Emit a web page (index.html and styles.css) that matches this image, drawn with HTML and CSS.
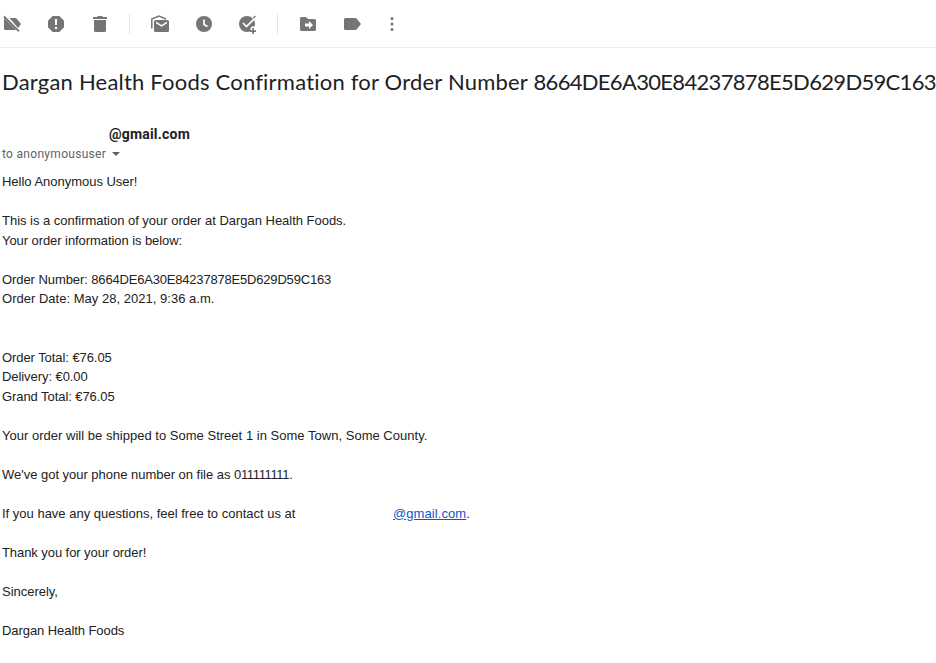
FILE: index.html
```html
<!DOCTYPE html>
<html lang="en">
<head>
<meta charset="utf-8">
<title>Order confirmation</title>
<link rel="stylesheet" href="styles.css">
</head>
<body>
<nav class="toolbar">
  <svg class="icon" viewBox="0 0 20 20"><path d="M7.500 4h5.700c.7 0 1.300.3 1.700.9L19 10l-3 4zM2 4l12.200 12H3.500Q2 16 2 14.500z"/><path d="M2 2.500 17 17.300" stroke="#757575" stroke-width="1.800"/></svg>
  <svg class="icon" viewBox="0 0 20 20"><path fill-rule="evenodd" d="M6.700 2h6.600L18 6.700v6.600L13.300 18H6.700L2 13.300V6.700zM9 5v6h2V5zm1 7.700a1.200 1.200 0 1 0 0 2.400 1.200 1.200 0 0 0 0-2.400z"/></svg>
  <svg class="icon" viewBox="0 0 20 20"><path d="M3 3h4l1-1h4l1 1h4v2H3zM4 6h12v10.500q0 1.500-1.500 1.500h-9Q4 18 4 16.500z"/></svg>
  <span class="divider"></span>
  <svg class="icon" viewBox="0 0 20 20"><path fill-rule="evenodd" d="M5.500 6h12Q19 6 19 7.500v9q0 1.500-1.500 1.500h-12Q4 18 4 16.500v-9Q4 6 5.500 6zM6 7.500v1.800l5.500 3.400L17 9.300V7.500L11.500 11z"/><path d="M1.800 14.500V5L9 2l7 3" fill="none" stroke="#757575" stroke-width="1.500"/></svg>
  <svg class="icon" viewBox="0 0 20 20"><circle cx="10" cy="10" r="8"/><path class="cut" d="M10 5.500v5l3.500 2"/></svg>
  <svg class="icon" viewBox="0 0 20 20"><circle cx="9" cy="10" r="8"/><path class="cut" d="m5 9 3.500 3.500L18 3"/><path d="m15.500 4 2-2" stroke="#757575" stroke-width="1.500"/><path d="M12.500 15.500v-1l1-2h4l1 3v5h-5z" fill="#fff"/><path d="M14.200 14h1.700v2.200H18v1.700h-2.100V20h-1.700v-2.100H12v-1.700h2.200z"/></svg>
  <span class="divider"></span>
  <svg class="icon" viewBox="0 0 20 20"><path fill-rule="evenodd" d="M3.500 3H8l2 2h6.500Q18 5 18 6.500v9q0 1.500-1.500 1.500h-13Q2 17 2 15.500v-11Q2 3 3.500 3zM11 7v2.500H7v3h4V15l4-4z"/></svg>
  <svg class="icon" viewBox="0 0 20 20"><path d="M3.500 4h9.700q1 0 1.600.8L19 10l-4.200 5.200q-.6.800-1.600.8H3.500Q2 16 2 14.500v-9Q2 4 3.500 4z"/></svg>
  <svg class="icon more" viewBox="0 0 20 20"><circle cx="10" cy="4.500" r="1.500"/><circle cx="10" cy="10" r="1.500"/><circle cx="10" cy="15.500" r="1.500"/></svg>
</nav>
<main class="message">
  <h1 class="subject">Dargan Health Foods Confirmation for Order Number <span class="hash">8664DE6A30E84237878E5D629D59C163</span></h1>
  <div class="sender">@gmail.com</div>
  <div class="recipient">to anonymoususer <span class="caret"></span></div>
  <div class="body">Hello Anonymous User!<br><br>This is a confirmation of your order at Dargan Health Foods.<br><span class="snug">Your order information is below:</span><br><br><span class="snug">Order Number: </span><span class="order-id">8664DE6A30E84237878E5D629D59C163</span><br><span class="loose">Order Date: May 28, 2021, 9:36 a.m.</span><br><br><br><span class="snug">Order Total: €76.05<br>Delivery: €0.00<br>Grand Total: €76.05</span><br><br><span class="loose">Your order will be shipped to Some Street 1 in Some Town, Some County.</span><br><br>We've got your phone number on file as <span class="phone">011111111</span>.<br><br><span class="question">If you have any questions, feel free to contact us at </span><a class="contact">@gmail.com</a>.<br><br><span class="snug">Thank you for your order!</span><br><br>Sincerely,<br><br><span class="snug">Dargan Health Foods</span></div>
</main>
</body>
</html>
```
FILE: styles.css
```css
body { margin: 0; background: #fff; color: #222; overflow: hidden; }
.toolbar { box-sizing: border-box; height: 48px; display: flex; align-items: center; gap: 24px; padding-left: 2px; border-bottom: 1px solid #eee; }
.icon { width: 20px; height: 20px; flex: none; fill: #757575; overflow: visible; position: relative; top: .5px; }
.icon .cut { fill: none; stroke: #fff; stroke-width: 1.7; }
.more { margin-left: -4px; }
.divider { width: 1px; height: 20px; background: #e4e4e4; margin: 0 -4px 0 -5px; }
.message { padding-left: 2px; }
.subject { margin: 20px 0 0; font: 400 22px/28px Lato, sans-serif; letter-spacing: .21px; color: #202124; white-space: nowrap; }
.hash { letter-spacing: -.68px; }
.sender { margin: 28px 0 0 107px; font: 700 14px/20px Roboto, sans-serif; letter-spacing: .2px; color: #202124; }
.recipient { display: flex; align-items: center; gap: 6px; font: 12px/20px Roboto, sans-serif; letter-spacing: .3px; color: #5f6368; }
.caret { border: 4px solid transparent; border-top-color: #5f6368; border-bottom: 0; }
.body { margin-top: 8px; font: 13px/19.5px "Liberation Sans", Arial, sans-serif; letter-spacing: -.02px; }
.snug { letter-spacing: -.07px; }
.loose { letter-spacing: .02px; }
.order-id { letter-spacing: -.19px; }
.phone { letter-spacing: -.35px; }
.question { letter-spacing: 0; }
.contact { margin-left: 94px; letter-spacing: .08px; color: #15c; text-decoration: underline; }
```
